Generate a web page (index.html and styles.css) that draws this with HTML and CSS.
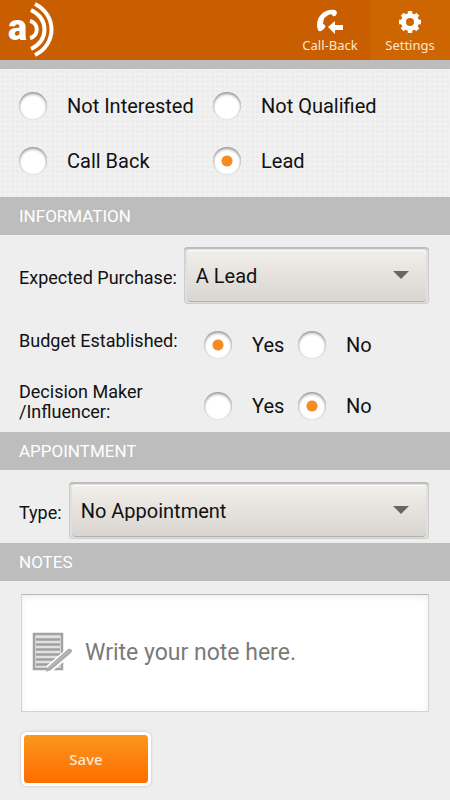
FILE: index.html
```html
<!DOCTYPE html>
<html lang="en">
<head>
<meta charset="utf-8">
<meta name="viewport" content="width=device-width, initial-scale=1">
<title>Call result</title>
<link rel="stylesheet" href="styles.css">
</head>
<body>
<header class="topbar">
  <div class="logo">
    <svg width="60" height="60" viewBox="0 0 60 60" role="img" aria-label="a">
      <text class="logo-letter" x="8" y="40">a</text>
      <g fill="none" stroke="#fff" stroke-width="4">
        <path d="M30 21C39 23 39 36 30 38"/>
        <path d="M31 10C49 19 49 40 31 49"/>
        <path d="M35 4C57 15 57 44 35 55"/>
      </g>
    </svg>
  </div>
  <nav class="actions">
    <button class="action" type="button">
      <svg width="28" height="26" viewBox="0 0 28 26" fill="#fff" aria-hidden="true">
        <path d="M2 22C-2 11 7 0 19 2Q21 3 21 5L20 7Q19 9 17 8L15 6Q7 8 7 16L9 17Q10 19 8 21L5 23Q3 24 2 22Z"/>
        <path d="M12 19L19 13V17H27V22H19V26Z"/>
      </svg>
      <span>Call-Back</span>
    </button>
    <button class="action action-active" type="button">
      <svg width="28" height="26" viewBox="0 0 28 26" aria-hidden="true">
        <circle cx="14" cy="14" r="6.5" fill="none" stroke="#fff" stroke-width="5"/>
        <g stroke="#fff" stroke-width="4.4">
          <path d="M14 3V7M14 21V25M3 14H7M21 14H25M6.2 6.2L9 9M19 19L21.8 21.8M21.8 6.2L19 9M9 19L6.2 21.8"/>
        </g>
      </svg>
      <span>Settings</span>
    </button>
  </nav>
</header>
<main>
  <form>
    <div class="outcomes" role="radiogroup" aria-label="Outcome">
      <label class="choice"><input type="radio" name="outcome">Not Interested</label>
      <label class="choice"><input type="radio" name="outcome">Not Qualified</label>
      <label class="choice"><input type="radio" name="outcome">Call Back</label>
      <label class="choice"><input type="radio" name="outcome" checked>Lead</label>
    </div>

    <h2 class="section-title">INFORMATION</h2>
    <div class="section">
      <div class="field">
        <label for="purchase">Expected Purchase:</label>
        <div class="picker">
          <select id="purchase"><option>A Lead</option></select>
        </div>
      </div>
      <div class="questions">
        <div class="question" role="radiogroup" aria-labelledby="budget">
          <span class="question-name" id="budget">Budget Established:</span>
          <label class="choice"><input type="radio" name="budget" checked>Yes</label>
          <label class="choice"><input type="radio" name="budget">No</label>
        </div>
        <div class="question" role="radiogroup" aria-labelledby="decision">
          <span class="question-name" id="decision">Decision Maker<br>/Influencer:</span>
          <label class="choice"><input type="radio" name="decision">Yes</label>
          <label class="choice"><input type="radio" name="decision" checked>No</label>
        </div>
      </div>
    </div>

    <h2 class="section-title">APPOINTMENT</h2>
    <div class="section">
      <div class="field">
        <label for="type">Type:</label>
        <div class="picker">
          <select id="type"><option>No Appointment</option></select>
        </div>
      </div>
    </div>

    <h2 class="section-title">NOTES</h2>
    <div class="notes">
      <div class="note-box">
        <svg width="42" height="42" viewBox="0 0 42 42" aria-hidden="true">
          <rect x="1" y="1" width="29" height="36" fill="#e2e2e2"/>
          <path d="M2 2H30V37H2Z" fill="none" stroke="#a3a3a3" stroke-width="2.5"/>
          <path d="M4 7.5H28M4 12.5H28M4 17.5H28M4 22.5H28M4 27.5H28M4 32.5H28" stroke="#a0a0a0" stroke-width="2.4"/>
          <path d="M17 37L38 19" stroke="#fff" stroke-width="8"/>
          <path d="M14 40L16 35L36 17Q38 16 40 18Q40 20 39 21L19 38Z" fill="#acacac"/>
          <path d="M17 36L37 19" stroke="#c0c0c0" stroke-width="1"/>
        </svg>
        <textarea aria-label="Note" rows="1" placeholder="Write your note here."></textarea>
      </div>
      <button class="save" type="submit">Save</button>
    </div>
  </form>
</main>
</body>
</html>
```
FILE: styles.css
```css
* {
  box-sizing: border-box;
}

body {
  margin: 0;
  background: #eee;
  color: #111;
  font-family: Roboto, "Liberation Sans", sans-serif;
  font-size: 18px;
  line-height: 20px;
}

button,
select,
textarea,
input {
  margin: 0;
  font: inherit;
  color: inherit;
}

.topbar {
  display: flex;
  justify-content: space-between;
  height: 69px;
  background: #c85e00;
  border-bottom: 9px solid #bdbdbd;
}

.logo-letter {
  fill: #fff;
  font-family: Roboto, sans-serif;
  font-size: 36px;
  font-weight: 900;
}

.actions {
  display: flex;
}

.action {
  display: flex;
  flex-direction: column;
  align-items: center;
  gap: 2px;
  width: 80px;
  padding: 8px 0 0;
  border: 0;
  background: none;
  color: #ffe6d0;
  font-family: "Noto Sans", sans-serif;
  font-size: 13px;
  line-height: 18px;
}

.action-active {
  background: #cd6600;
}

.outcomes {
  display: grid;
  grid-template-columns: 194px 1fr;
  row-gap: 27px;
  padding: 23px 19px 22px;
  background: radial-gradient(circle, #ebebeb 1px, #f1f1f1 2px) 0 0 / 5px 5px;
}

.choice {
  display: flex;
  align-items: center;
  gap: 20px;
  font-size: 20px;
  line-height: 28px;
  white-space: nowrap;
}

.choice input {
  appearance: none;
  flex: none;
  width: 28px;
  height: 28px;
  border-radius: 50%;
  background: #fff;
  box-shadow: inset 0 2px 3px #999, inset 0 0 2px #bbb;
}

.choice input:checked {
  background: radial-gradient(circle, #f78a20 5px, #fff 6px);
}

.section-title {
  margin: 0;
  padding: 0 19px;
  background: #bdbdbd;
  color: #fff;
  font-size: 17px;
  font-weight: 400;
  line-height: 38px;
}

.section {
  padding: 12px 21px 4px 19px;
}

.section:has(.questions) {
  padding-bottom: 0;
}

.field {
  display: flex;
  align-items: center;
  gap: 7px;
}

.field label {
  padding-top: 4px;
}

.picker {
  position: relative;
  flex: 1;
  padding: 3px;
  border-radius: 4px;
  background: #e4e4e4;
  box-shadow: inset 0 2px 1px #bdbdbd, inset 0 0 1px 1px #ccc;
}

.picker::after {
  content: "";
  position: absolute;
  top: 24px;
  right: 20px;
  border: 8px solid transparent;
  border-top-color: #666;
  border-bottom: 0;
  pointer-events: none;
}

.picker select {
  appearance: none;
  display: block;
  width: 100%;
  height: 51px;
  padding: 0 9px;
  border: 0;
  border-radius: 4px;
  background: linear-gradient(#f2efeb, #d9d5d0);
  box-shadow: 0 1px 1px #aaa, inset 0 1px #fff;
  font-size: 20px;
}

.questions {
  display: grid;
  gap: 9px;
  margin-top: 15px;
}

.question {
  display: grid;
  grid-template-columns: 185px 94px 1fr;
  align-items: center;
  min-height: 52px;
}

.question-name {
  padding-bottom: 9px;
}

.notes {
  padding: 13px 21px 12px;
}

.note-box {
  display: flex;
  align-items: center;
  gap: 11px;
  min-height: 118px;
  padding: 0 10px;
  border: 1px solid #d3d3d3;
  border-top-color: #b5b5b5;
  background: #fff;
  box-shadow: inset 0 2px 6px #eee;
}

.note-box textarea {
  flex: 1;
  min-width: 0;
  height: 32px;
  padding: 0;
  border: 0;
  outline: 0;
  resize: none;
  overflow: hidden;
  background: none;
  font-size: 23px;
  line-height: 32px;
}

.note-box textarea::placeholder {
  color: #7a7a7a;
}

.save {
  width: 130px;
  height: 54px;
  margin-top: 20px;
  border: 3px solid #fff;
  border-radius: 6px;
  background: linear-gradient(#fa981d, #ff6c00) padding-box;
  box-shadow: 0 0 3px #bbb;
  color: #ffe9d8;
  font-family: "Noto Sans", sans-serif;
  font-size: 15px;
  font-weight: 500;
}
```
